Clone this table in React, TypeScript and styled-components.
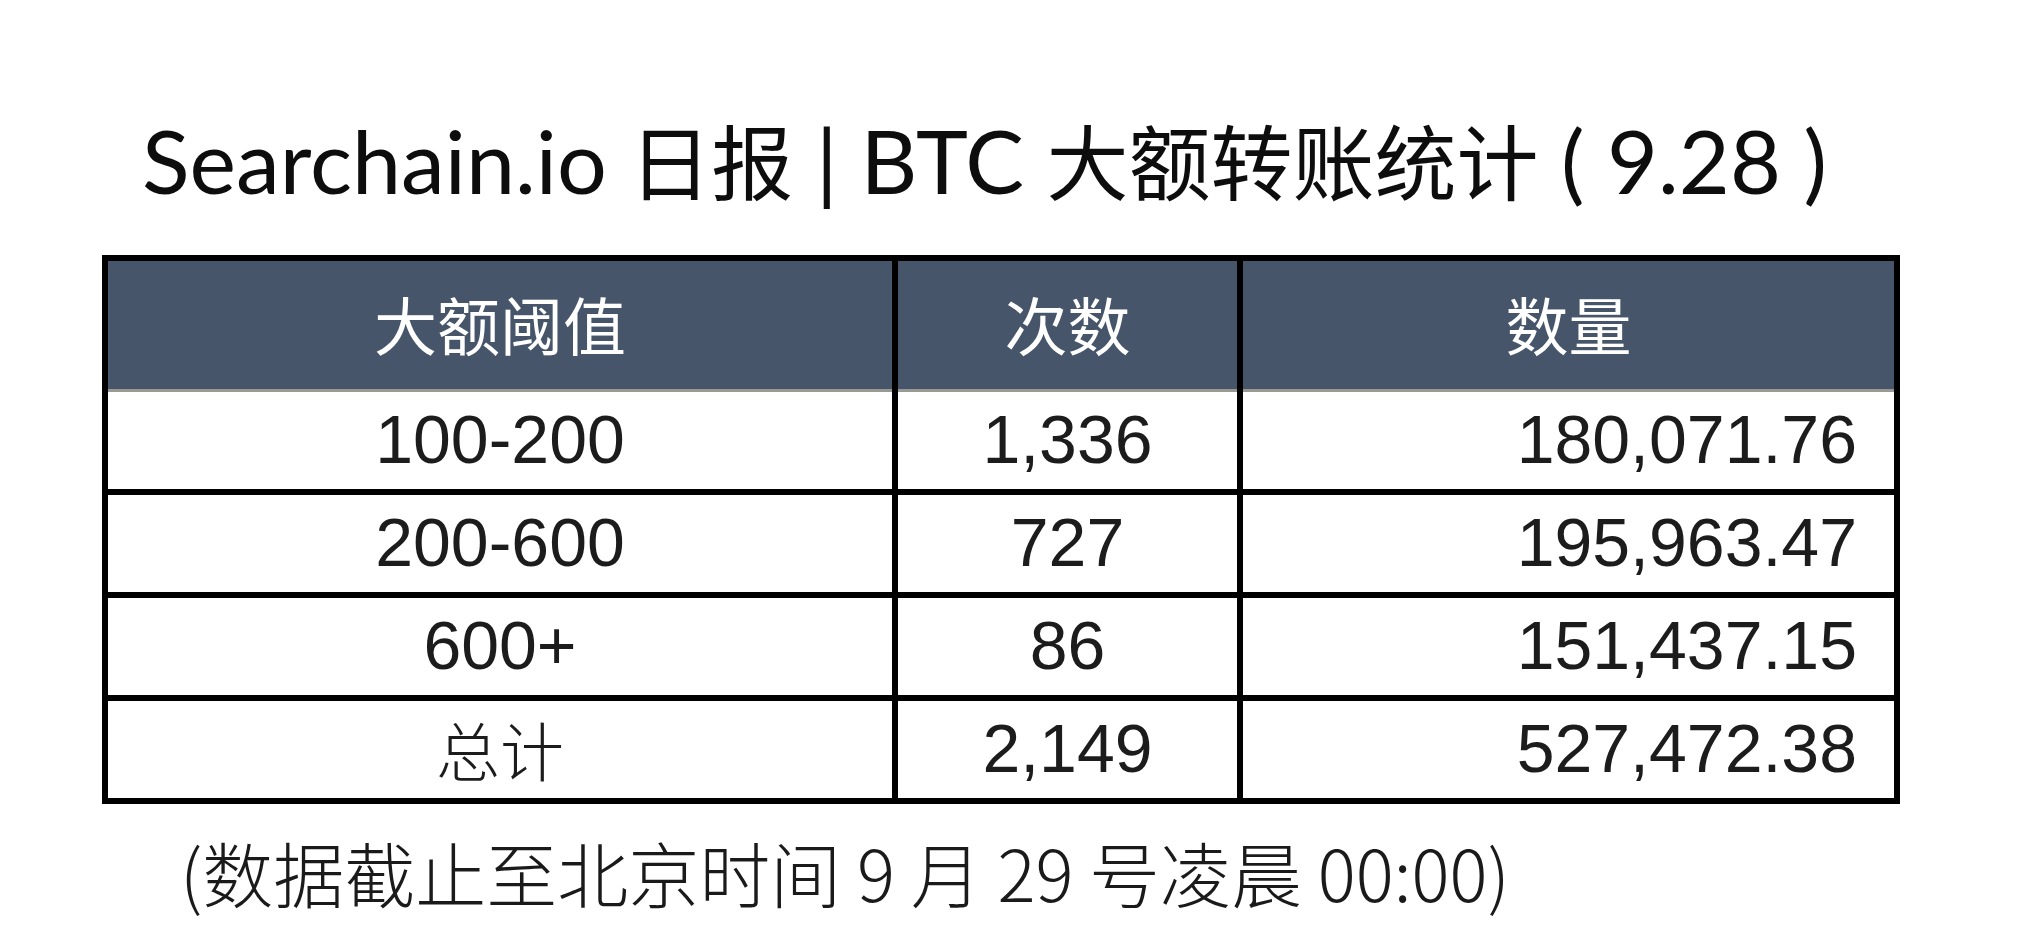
import React from 'react';
import styled, { createGlobalStyle } from 'styled-components';

const GlobalStyle = createGlobalStyle`
  html, body {
    margin: 0;
    padding: 0;
    background: #ffffff;
  }
  body {
    font-family: 'Lato', 'Noto Sans CJK SC', sans-serif;
    color: #111;
  }
`;

type Row = { range: string; count: string; amount: string; han?: boolean };

const rows: Row[] = [
  { range: '100-200', count: '1,336', amount: '180,071.76' },
  { range: '200-600', count: '727', amount: '195,963.47' },
  { range: '600+', count: '86', amount: '151,437.15' },
  { range: '总计', count: '2,149', amount: '527,472.38', han: true },
];

const App: React.FC = () => {
  return (
    <Page>
      <GlobalStyle />
      <Title>
        Searchain.io <Han>日报</Han> | BTC <Han>大额转账统计</Han> ( 9.28 )
      </Title>
      <Table>
        <HeadCell>大额阈值</HeadCell>
        <HeadCell>次数</HeadCell>
        <HeadCell $last>数量</HeadCell>
        {rows.map((r) => (
          <React.Fragment key={r.range}>
            <Cell $han={r.han}>{r.range}</Cell>
            <Cell>{r.count}</Cell>
            <Cell $last $right>
              {r.amount}
            </Cell>
          </React.Fragment>
        ))}
      </Table>
      <Note>(数据截止至北京时间 9 月 29 号凌晨 00:00)</Note>
    </Page>
  );
};

const Page = styled.div`
  width: 2020px;
  height: 932px;
  box-sizing: border-box;
  padding: 111px 0 0 102px;
  overflow: hidden;
`;

const Title = styled.h1`
  margin: 0 0 47px 0;
  padding-left: 40px;
  font-family: 'Lato', 'Noto Sans CJK SC', sans-serif;
  font-weight: 400;
  font-size: 88px;
  line-height: 95px;
  color: #0d0d0d;
  white-space: nowrap;
`;

const Han = styled.span`
  font-family: 'Noto Sans CJK SC', sans-serif;
  font-size: 82px;
`;

const Table = styled.div`
  display: grid;
  grid-template-columns: 790px 345px 651px;
  grid-template-rows: 131px repeat(4, 103px);
  width: 1798px;
  box-sizing: border-box;
  border-top: 6px solid #000;
  border-left: 6px solid #000;
  border-right: 6px solid #000;
`;

const HeadCell = styled.div<{ $last?: boolean }>`
  display: flex;
  align-items: center;
  justify-content: center;
  background: #465569;
  color: #ffffff;
  font-family: 'Noto Sans CJK SC', sans-serif;
  font-weight: 400;
  font-size: 63px;
  padding-bottom: 8px;
  box-sizing: border-box;
  border-right: ${(p) => (p.$last ? 'none' : '6px solid #000')};
  box-shadow: inset 0 -3px 0 #9a9a94;
`;

const Cell = styled.div<{ $last?: boolean; $right?: boolean; $han?: boolean }>`
  display: flex;
  align-items: center;
  justify-content: ${(p) => (p.$right ? 'flex-end' : 'center')};
  padding-right: ${(p) => (p.$right ? '37px' : '0')};
  padding-bottom: 4px;
  box-sizing: border-box;
  background: #ffffff;
  color: #1c1c1c;
  font-family: ${(p) =>
    p.$han ? "'Noto Sans CJK SC', sans-serif" : "'Liberation Sans', 'Noto Sans CJK SC', sans-serif"};
  font-weight: ${(p) => (p.$han ? 300 : 400)};
  font-size: ${(p) => (p.$han ? '64px' : '68px')};
  line-height: 1;
  border-right: ${(p) => (p.$last ? 'none' : '6px solid #000')};
  border-bottom: 6px solid #000;
`;

const Note = styled.p`
  margin: 32px 0 0 0;
  padding-left: 78px;
  font-family: 'Noto Sans CJK SC', sans-serif;
  font-weight: 300;
  font-size: 71px;
  line-height: 1;
  color: #1a1a1a;
  white-space: nowrap;
`;

export default App;
